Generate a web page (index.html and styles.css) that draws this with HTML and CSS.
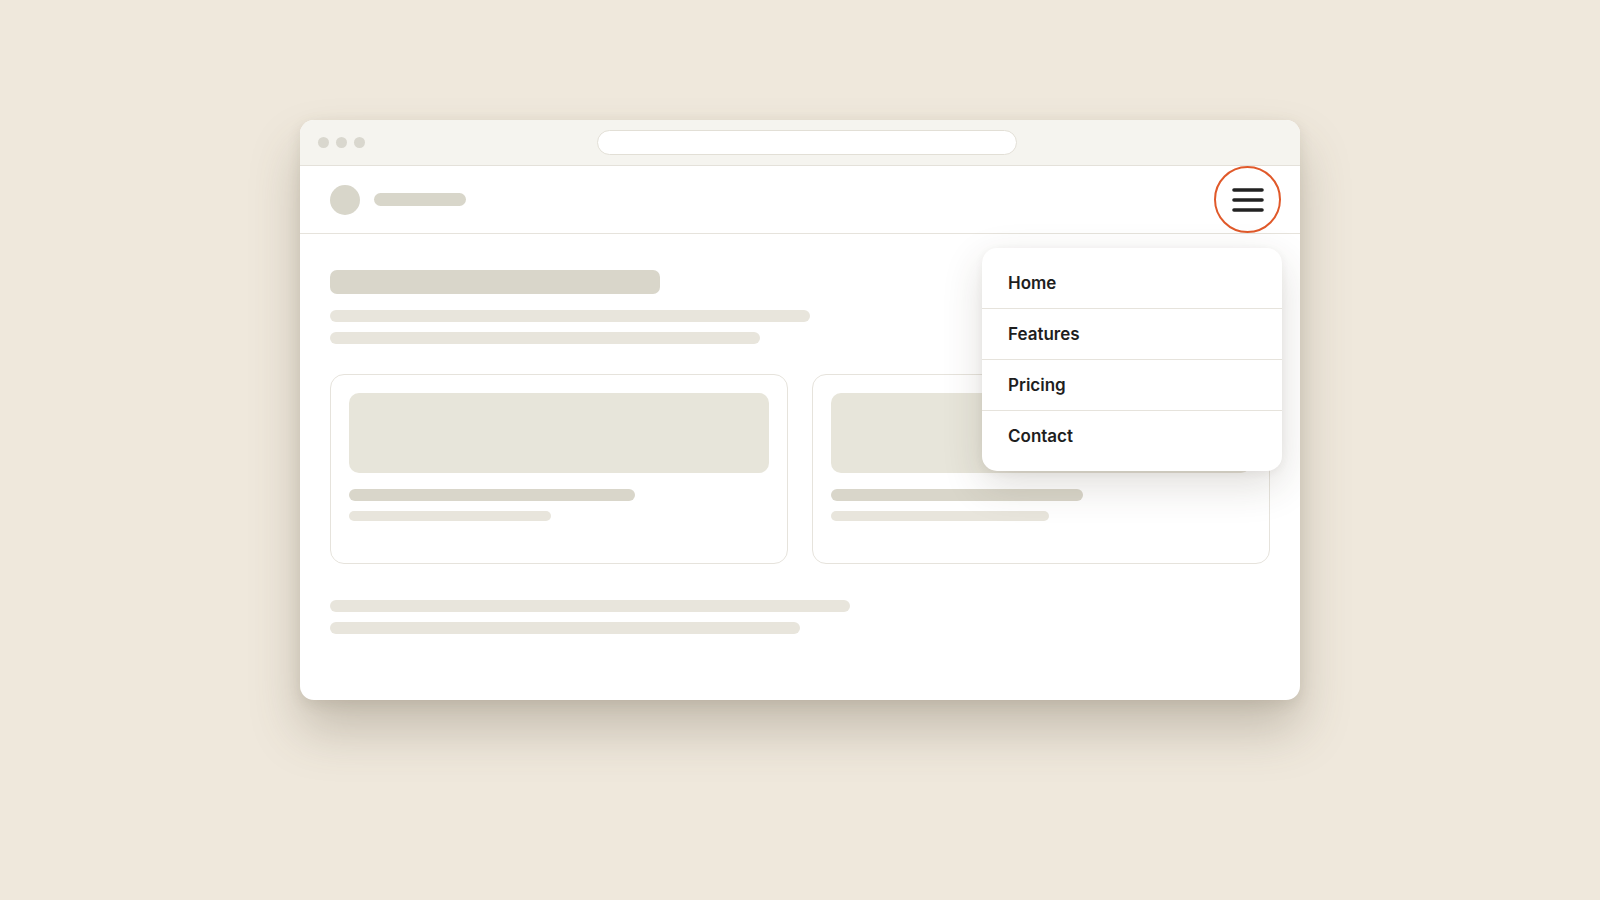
FILE: index.html
```html
<!DOCTYPE html>
<html lang="en">
<head>
    <meta charset="UTF-8">
    <meta name="viewport" content="width=device-width, initial-scale=1.0">
    <title>Mobile Menu</title>
    <link rel="stylesheet" href="styles.css">
</head>
<body>

<div class="window">
    <div class="titlebar">
        <div class="dots">
            <span class="dot"></span>
            <span class="dot"></span>
            <span class="dot"></span>
        </div>
        <div class="address"></div>
    </div>

    <header class="nav">
        <div class="brand">
            <span class="logo"></span>
            <span class="logo-text"></span>
        </div>
        <button class="menu-btn" aria-label="Open menu">
            <svg width="32" height="26" viewBox="0 0 32 26">
                <path d="M2 3h28M2 13h28M2 23h28" stroke="#222" stroke-width="3.6" stroke-linecap="round" fill="none"/>
            </svg>
        </button>
    </header>

    <main class="content">
        <div class="bar heading"></div>
        <div class="bar line" style="width: 480px"></div>
        <div class="bar line" style="width: 430px"></div>

        <div class="cards">
            <div class="card">
                <div class="thumb"></div>
                <div class="bar card-title" style="width: 286px"></div>
                <div class="bar card-text" style="width: 202px"></div>
            </div>
            <div class="card">
                <div class="thumb"></div>
                <div class="bar card-title" style="width: 252px"></div>
                <div class="bar card-text" style="width: 218px"></div>
            </div>
        </div>

        <div class="footer-lines">
            <div class="bar line" style="width: 520px"></div>
            <div class="bar line" style="width: 470px"></div>
        </div>
    </main>

    <nav class="dropdown">
        <a href="#">Home</a>
        <a href="#">Features</a>
        <a href="#">Pricing</a>
        <a href="#">Contact</a>
    </nav>
</div>

</body>
</html>
```

FILE: styles.css
```css
body {
    box-sizing: border-box;
    margin: 0;
    padding-top: 120px;
    min-height: 100vh;
    background: #efe8dc;
    font-family: 'Inter', 'Noto Sans', sans-serif;
}
.window {
    position: relative;
    width: 1000px;
    height: 580px;
    margin: 0 auto;
    background: #fff;
    border-radius: 14px;
    overflow: hidden;
    box-shadow: 0 30px 50px rgba(90, 80, 60, 0.28), 0 4px 14px rgba(90, 80, 60, 0.12);
}
.titlebar {
    display: flex;
    align-items: center;
    height: 45px;
    padding: 0 18px;
    background: #f5f4ef;
    border-bottom: 1px solid #e4e1da;
}
.dots {
    display: flex;
    gap: 7px;
}
.dot {
    width: 11px;
    height: 11px;
    border-radius: 50%;
    background: #d9d7ce;
}
.address {
    width: 418px;
    height: 23px;
    margin-left: 232px;
    background: #fff;
    border: 1px solid #e2dfd6;
    border-radius: 13px;
}
.nav {
    display: flex;
    align-items: center;
    justify-content: space-between;
    height: 67px;
    padding: 0 19px 0 30px;
    border-bottom: 1px solid #e6e3dc;
}
.brand {
    display: flex;
    align-items: center;
    gap: 14px;
}
.logo {
    width: 30px;
    height: 30px;
    border-radius: 50%;
    background: #d8d6ca;
}
.logo-text {
    width: 92px;
    height: 13px;
    border-radius: 7px;
    background: #d8d6ca;
}
.menu-btn {
    display: flex;
    align-items: center;
    justify-content: center;
    width: 67px;
    height: 67px;
    padding: 0;
    background: #fff;
    border: 2px solid #e0592a;
    border-radius: 50%;
    cursor: pointer;
}
.content {
    padding: 36px 30px 0;
}
.bar {
    border-radius: 7px;
}
.heading {
    width: 330px;
    height: 24px;
    margin-bottom: 16px;
    background: #d9d6ca;
}
.line {
    height: 12px;
    margin-bottom: 10px;
    background: #e8e5dc;
}
.cards {
    display: flex;
    gap: 24px;
    margin-top: 30px;
}
.card {
    box-sizing: border-box;
    width: 458px;
    height: 190px;
    padding: 18px;
    border: 1px solid #e6e3dc;
    border-radius: 14px;
}
.thumb {
    height: 80px;
    margin-bottom: 16px;
    border-radius: 10px;
    background: #e7e5da;
}
.card-title {
    height: 12px;
    margin-bottom: 10px;
    background: #d9d6ca;
}
.card-text {
    height: 10px;
    background: #e8e5dc;
}
.footer-lines {
    margin-top: 36px;
}
.dropdown {
    position: absolute;
    top: 128px;
    right: 18px;
    width: 300px;
    padding: 10px 0;
    background: #fff;
    border-radius: 15px;
    box-shadow: 0 14px 40px rgba(60, 50, 30, 0.16), 0 2px 8px rgba(60, 50, 30, 0.06);
}
.dropdown a {
    display: flex;
    align-items: center;
    height: 50px;
    padding: 0 26px;
    color: #1e1e1e;
    font-size: 17px;
    font-weight: 600;
    text-decoration: none;
}
.dropdown a + a {
    border-top: 1px solid #e6e3dc;
}
```
